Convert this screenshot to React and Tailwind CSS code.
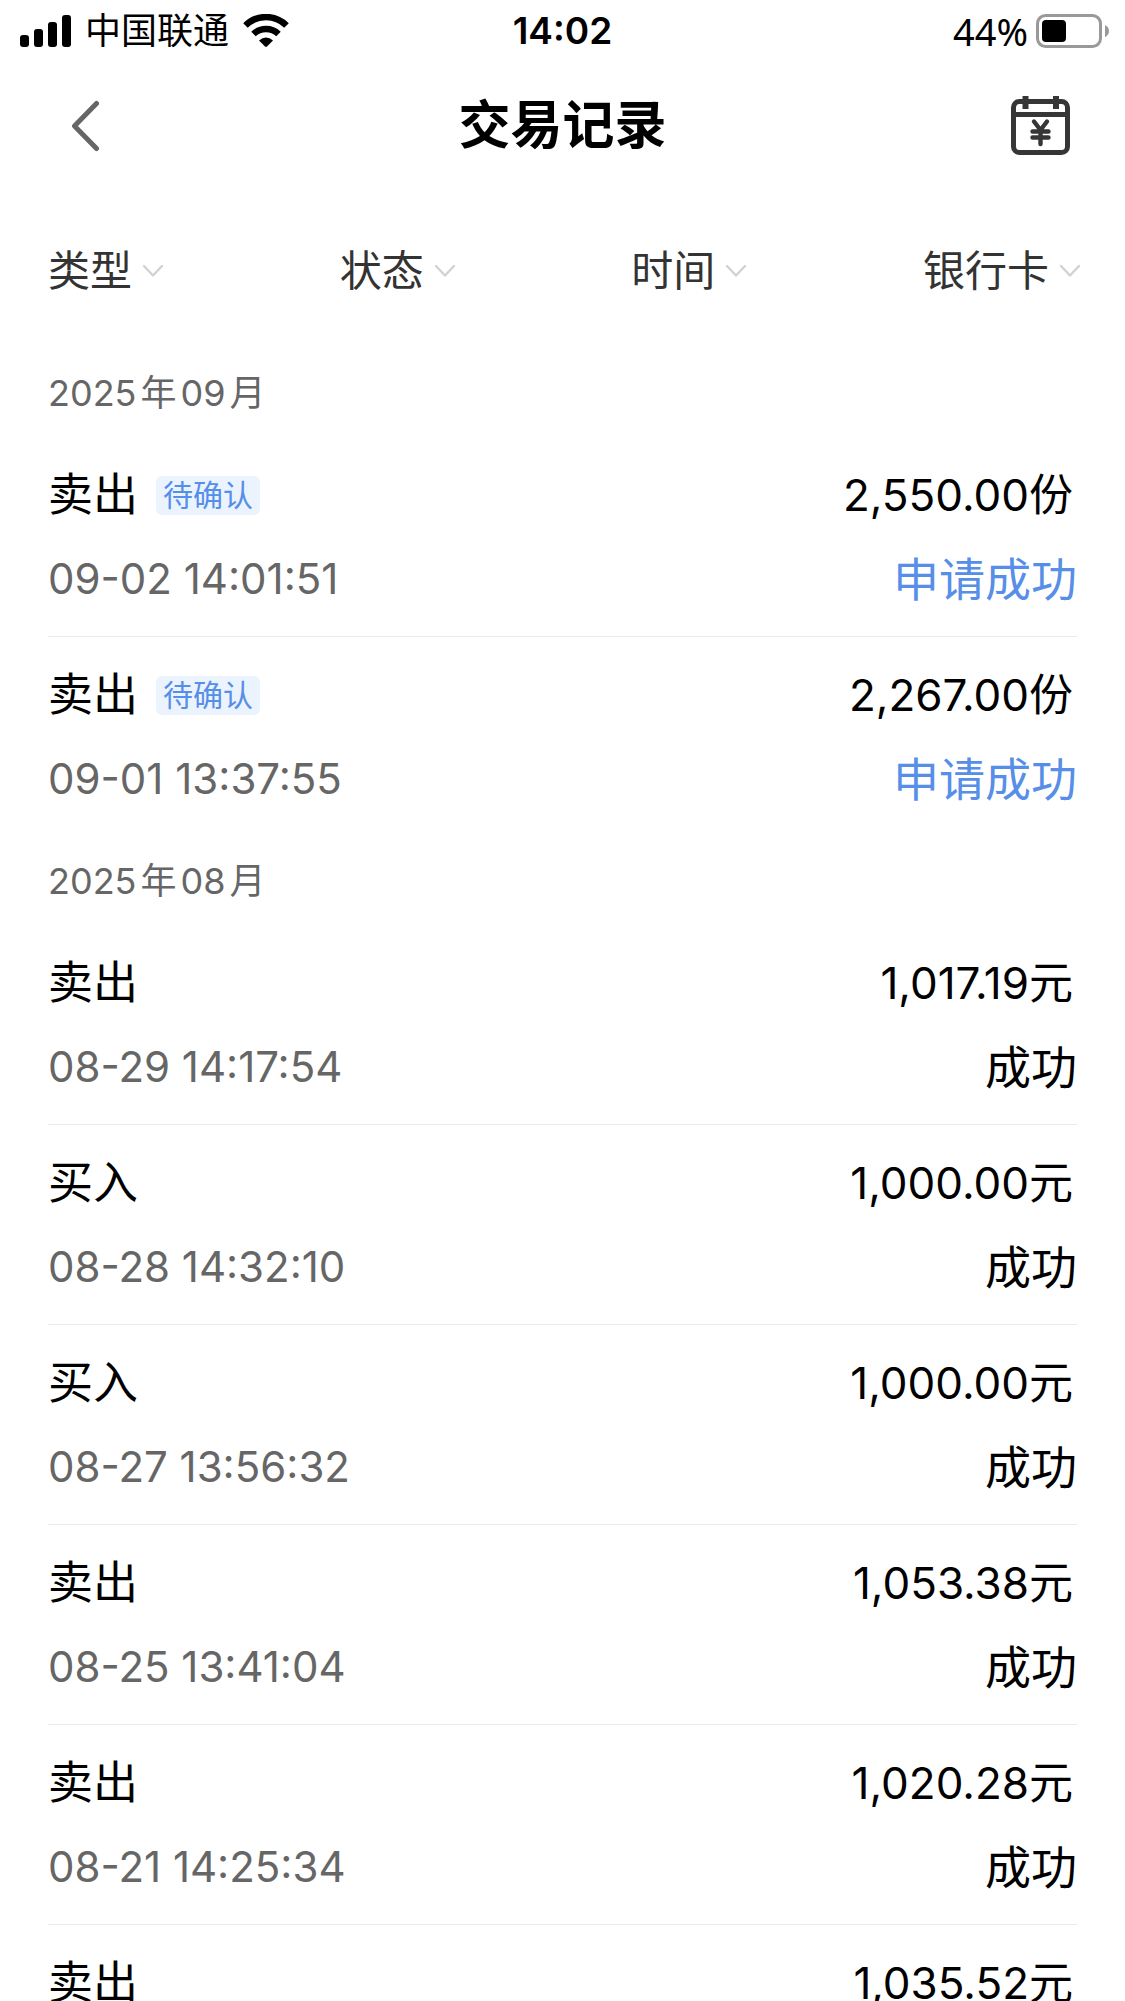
const SECTIONS = [
  {
    year: '2025',
    month: '09',
    records: [
      { type: '卖出', tag: '待确认', time: '09-02 14:01:51', amount: '2,550.00', unit: '份', status: '申请成功', pending: true },
      { type: '卖出', tag: '待确认', time: '09-01 13:37:55', amount: '2,267.00', unit: '份', status: '申请成功', pending: true },
    ],
  },
  {
    year: '2025',
    month: '08',
    records: [
      { type: '卖出', time: '08-29 14:17:54', amount: '1,017.19', unit: '元', status: '成功' },
      { type: '买入', time: '08-28 14:32:10', amount: '1,000.00', unit: '元', status: '成功' },
      { type: '买入', time: '08-27 13:56:32', amount: '1,000.00', unit: '元', status: '成功' },
      { type: '卖出', time: '08-25 13:41:04', amount: '1,053.38', unit: '元', status: '成功' },
      { type: '卖出', time: '08-21 14:25:34', amount: '1,020.28', unit: '元', status: '成功' },
      { type: '卖出', amount: '1,035.52', unit: '元' },
    ],
  },
];

const FILTERS = ['类型', '状态', '时间', '银行卡'];

function SignalIcon() {
  return (
    <svg width="51" height="32" viewBox="0 0 51 32" aria-hidden="true">
      <rect x="0" y="20" width="9" height="12" rx="3" />
      <rect x="14" y="14" width="9" height="18" rx="3" />
      <rect x="28" y="7" width="9" height="25" rx="3" />
      <rect x="42" y="0" width="9" height="32" rx="3" />
    </svg>
  );
}

function WifiIcon() {
  return (
    <svg width="46" height="34" viewBox="0 0 46 34" fill="none" stroke="#000" aria-hidden="true">
      <path d="M2.5 11.5 A29 29 0 0 1 43.5 11.5" strokeWidth="6.4" />
      <path d="M10.5 20 A18 18 0 0 1 35.5 20" strokeWidth="6.4" />
      <path d="M16 26.5 Q23 20.5 30 26.5 L24 32.6 Q23 33.4 22 32.6 Z" fill="#000" stroke="none" />
    </svg>
  );
}

function BatteryIcon() {
  return (
    <svg width="73" height="34" viewBox="0 0 73 34" aria-hidden="true">
      <rect x="1.5" y="1.5" width="63" height="31" rx="8" fill="none" stroke="#999" strokeWidth="3" />
      <rect x="6" y="6" width="24" height="22" rx="4" />
      <path d="M69 11 Q73 13 73 17 Q73 21 69 23 Z" fill="#999" />
    </svg>
  );
}

function StatusBar() {
  return (
    <div className="grid h-[62px] shrink-0 grid-cols-3 items-center px-4 text-[36px] leading-[48px]">
      <div className="flex items-center gap-[14px] pl-1">
        <SignalIcon />
        <span>中国联通</span>
        <WifiIcon />
      </div>
      <time className="text-center text-[37px] font-semibold">14:02</time>
      <div className="flex items-center justify-end gap-2">
        <span className="font-['Noto_Sans',sans-serif] text-[38px]">44%</span>
        <BatteryIcon />
      </div>
    </div>
  );
}

function Header() {
  return (
    <header className="flex h-[128px] shrink-0 items-center justify-between px-[51px]">
      <button type="button" aria-label="返回" className="flex w-[64px] justify-start pl-5">
        <svg width="28" height="52" viewBox="0 0 28 52" fill="none" stroke="#666" strokeWidth="5" strokeLinecap="round" strokeLinejoin="round" aria-hidden="true">
          <path d="M25.5 3.5 L3.5 26 L25.5 48.5" />
        </svg>
      </button>
      <h1 className="text-[52px] leading-[64px] font-bold">交易记录</h1>
      <button type="button" aria-label="交易日历" className="flex w-[64px] justify-end">
        <svg width="64" height="64" viewBox="2 2 64 64" fill="none" stroke="#363636" aria-hidden="true">
          <rect x="5.5" y="9.5" width="54" height="51" rx="6" strokeWidth="5" />
          <path d="M5 22.5 H60" strokeWidth="5" />
          <path d="M17.5 4 V17 M48 4 V17" strokeWidth="6" />
          <path d="M26 29.5 L32.5 38 L39 29.5 M32.5 38 V52 M24.5 39.5 H40.5 M24.5 45.5 H40.5" strokeWidth="4.4" strokeLinecap="round" strokeLinejoin="round" />
        </svg>
      </button>
    </header>
  );
}

function Filter({ name }) {
  return (
    <div className="relative flex items-center">
      <select
        aria-label={name}
        className="appearance-none bg-transparent pr-[31px] text-[42px] leading-[60px] text-[#333] outline-none"
      >
        <option>{name}</option>
      </select>
      <svg
        className="pointer-events-none absolute right-0"
        width="22"
        height="14"
        viewBox="0 0 22 14"
        fill="none"
        stroke="#d2d2d2"
        strokeWidth="2.4"
        strokeLinecap="round"
        strokeLinejoin="round"
        aria-hidden="true"
      >
        <path d="M2 2 L11 11.5 L20 2" />
      </svg>
    </div>
  );
}

function Record({ record }) {
  return (
    <li className="flex flex-col gap-8 border-t border-[#ebebeb] pt-8 pb-[31px] text-[45px] leading-[52px] first:border-transparent">
      <div className="flex items-center justify-between">
        <div className="flex items-center gap-[18px]">
          <span>{record.type}</span>
          {record.tag && (
            <span className="rounded-md bg-[#ebf3fe] px-[7px] text-[30px] leading-[39px] text-[#568ee8]">{record.tag}</span>
          )}
        </div>
        <span className="pr-1 text-[44px]">
          {record.amount}
          {record.unit}
        </span>
      </div>
      {record.time && (
        <div className="flex items-center justify-between">
          <time className="text-[42px] text-[#666]">{record.time}</time>
          <span className={record.pending ? 'text-[46px] text-[#568ee8]' : 'text-[46px] text-black'}>{record.status}</span>
        </div>
      )}
    </li>
  );
}

export default function App() {
  return (
    <div className="flex h-screen flex-col overflow-hidden bg-white font-['Inter','Noto_Sans_CJK_SC',sans-serif] text-black">
      <StatusBar />
      <Header />
      <nav aria-label="筛选" className="flex h-[158px] shrink-0 items-center justify-between pt-1 pr-11 pl-12">
        {FILTERS.map((name) => (
          <Filter key={name} name={name} />
        ))}
      </nav>
      <main className="min-h-0 flex-1 overflow-y-auto px-12 [scrollbar-width:none]">
        {SECTIONS.map((section) => (
          <section key={section.month}>
            <h2 className="flex h-[88px] items-center gap-1 pt-0.5 text-[36px] text-[#666]">
              <span>{section.year}</span>
              <span>年</span>
              <span>{section.month}</span>
              <span>月</span>
            </h2>
            <ul>
              {section.records.map((record, i) => (
                <Record key={i} record={record} />
              ))}
            </ul>
          </section>
        ))}
      </main>
    </div>
  );
}
